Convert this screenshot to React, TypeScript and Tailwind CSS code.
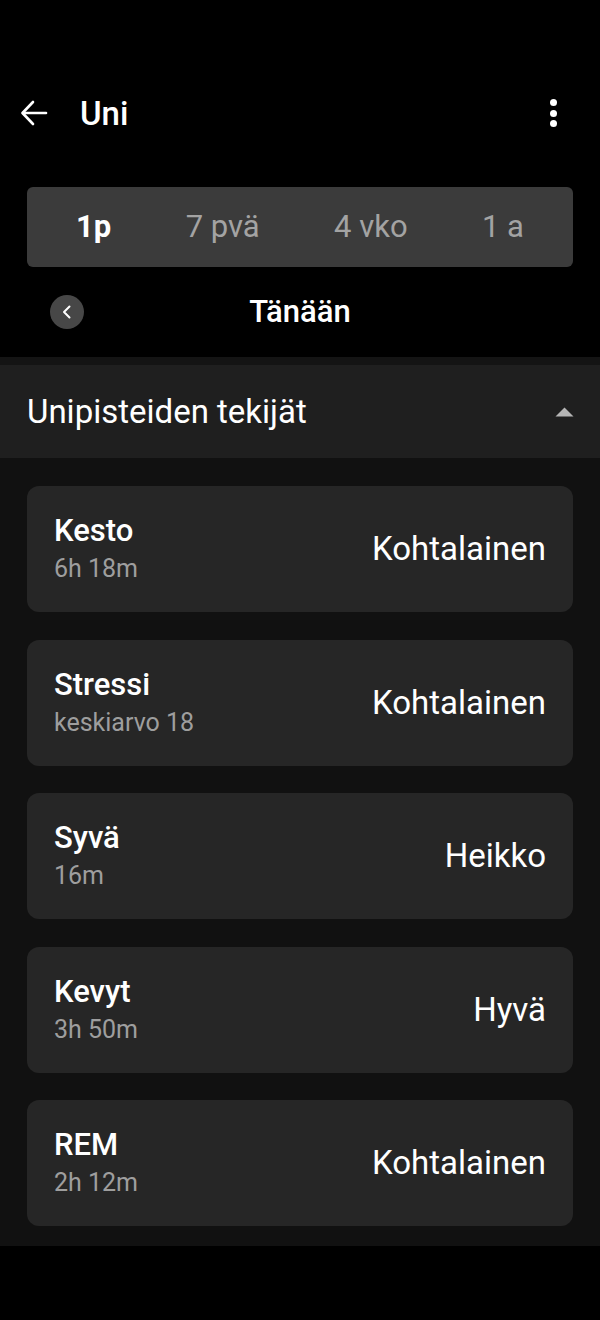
import React from "react";

const items = [
  { title: "Kesto", sub: "6h 18m", value: "Kohtalainen" },
  { title: "Stressi", sub: "keskiarvo 18", value: "Kohtalainen" },
  { title: "Syvä", sub: "16m", value: "Heikko" },
  { title: "Kevyt", sub: "3h 50m", value: "Hyvä" },
  { title: "REM", sub: "2h 12m", value: "Kohtalainen" },
];

export default function App() {
  return (
    <div
      className="w-[600px] min-h-[1320px] bg-black text-white"
      style={{ fontFamily: "Roboto, 'Noto Sans', sans-serif" }}
    >
      <div className="pt-[78px]">
        {/* Header */}
        <div className="h-[70px] flex items-center pl-[19px] pr-[43px]">
          <svg width="30" height="30" viewBox="0 0 30 30" fill="none" stroke="white" strokeWidth="2.6" strokeLinecap="round" strokeLinejoin="round">
            <path d="M27 15H4" />
            <path d="M14 4L3.5 15L14 26" />
          </svg>
          <div className="ml-[31px] text-[33px] font-medium leading-none">Uni</div>
          <div className="ml-auto flex flex-col gap-[3.5px] items-center">
            <span className="w-[7px] h-[7px] rounded-full bg-white" />
            <span className="w-[7px] h-[7px] rounded-full bg-white" />
            <span className="w-[7px] h-[7px] rounded-full bg-white" />
          </div>
        </div>

        {/* Tabs */}
        <div className="mx-[27px] mt-[39px] h-[80px] rounded-[6px] bg-[#3b3b3b] flex items-center justify-between px-[49px] text-[31px]">
          <span className="font-bold text-white">1p</span>
          <span className="text-[#a3a3a3]">7 pvä</span>
          <span className="text-[#a3a3a3]">4 vko</span>
          <span className="text-[#a3a3a3]">1 a</span>
        </div>

        {/* Date nav */}
        <div className="relative mt-[21px] h-[48px] flex items-center justify-center">
          <div className="absolute left-[50px] top-[7px] w-[34px] h-[34px] rounded-full bg-[#474747] flex items-center justify-center">
            <svg width="16" height="16" viewBox="0 0 16 16" fill="none" stroke="white" strokeWidth="2" strokeLinecap="round" strokeLinejoin="round">
              <path d="M10.5 2.5L5 8L10.5 13.5" />
            </svg>
          </div>
          <div className="text-[31px] font-medium">Tänään</div>
        </div>

        <div className="mt-[21px] h-[8px] bg-[#141414]" />

        {/* Section header */}
        <div className="h-[93px] bg-[#1f1f1f] flex items-center pl-[27px] pr-[26px]">
          <div className="text-[33px] font-normal">Unipisteiden tekijät</div>
          <svg className="ml-auto" width="19" height="10" viewBox="0 0 19 10">
            <path d="M9.5 0.5L18.5 9.5H0.5Z" fill="#b5b5b5" />
          </svg>
        </div>

        {/* List */}
        <div className="bg-[#111111] px-[27px] pt-[28px] pb-[20px] flex flex-col gap-[27.5px]">
          {items.map((it) => (
            <div
              key={it.title}
              className="h-[126px] rounded-[12px] bg-[#262626] flex items-center pl-[27px] pr-[27px]"
            >
              <div className="flex flex-col">
                <div className="text-[31px] font-medium leading-[36px]">{it.title}</div>
                <div className="text-[25px] text-[#9e9e9e] leading-[32px] mt-[4px]">{it.sub}</div>
              </div>
              <div className="ml-auto text-[33px] font-normal">{it.value}</div>
            </div>
          ))}
        </div>
      </div>
    </div>
  );
}
